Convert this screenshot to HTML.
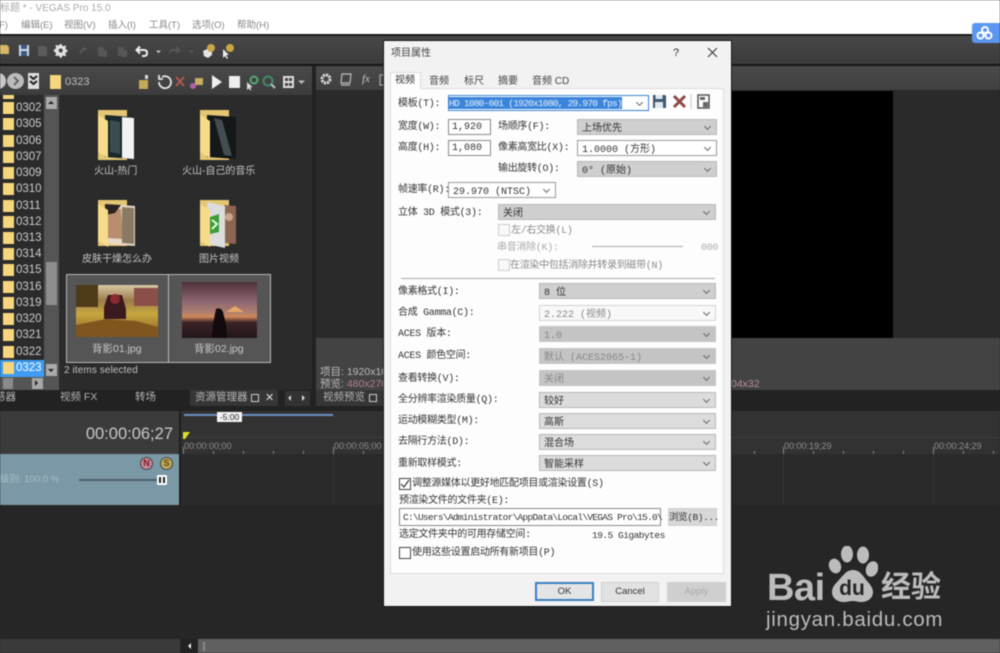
<!DOCTYPE html>
<html><head><meta charset="utf-8"><style>
html,body{margin:0;padding:0;background:#262626;overflow:hidden}
#p{position:relative;width:1000px;height:653px;overflow:hidden;background:#262626;filter:blur(.45px);font-family:"Liberation Sans","Noto Sans CJK SC",sans-serif}
#p div,#p span.a,#p svg{position:absolute}
.t{position:absolute;white-space:nowrap;line-height:16px;height:16px}
.tr .t{color:#ccc;font-size:11.5px;left:16px}
.fi{position:absolute;left:3px;width:11px;height:12px;background:#f6d77e}
.tb{color:#b5b5b5;font-size:10.5px}
.d{color:#333;font-size:10px;letter-spacing:-.3px;margin-top:2px;font-family:"Liberation Mono","Noto Sans CJK SC",monospace}
.s{position:absolute;height:14px;background:#cfcfcf;border:1px solid #b8b8b8;color:#333;font-size:10px;line-height:19px;padding-left:4px;font-family:"Liberation Mono","Noto Sans CJK SC",monospace;white-space:nowrap;box-sizing:content-box}
.s.w{background:#fff;border-color:#9a9a9a}
.s.dis{background:#c4c4c4;color:#888;border-color:#c4c4c4}
.s.dw{background:#f8f8f8;color:#888;border-color:#d4d4d4}
.s::after{content:"";position:absolute;right:6px;top:4px;width:4px;height:4px;border-right:1px solid #666;border-bottom:1px solid #666;transform:rotate(45deg)}
.i{position:absolute;background:#fff;border:1px solid #8a8a8a;color:#333;font-size:10px;line-height:16px;padding-left:3px;font-family:"Liberation Mono",monospace;white-space:nowrap}
.c{position:absolute;width:10px;height:10px;border:1px solid #444;background:#fff}
.c.o{border-color:#ccc;background:#f8f8f8}
.btn{position:absolute;height:18px;background:#e2e2e2;border:1px solid #d0d0d0;text-align:center;font-size:9.5px;line-height:18px;color:#333;box-sizing:content-box;white-space:nowrap}
.tc{color:#8f8f8f;font-size:9px;font-family:"Liberation Sans",sans-serif}
.tk{position:absolute;width:1px;height:3px;background:#888;top:451px}
</style></head><body><div id="p">

<!-- top white window -->
<div style="left:0;top:0;width:1000px;height:35px;background:#fff"></div>
<div class="t" style="left:0;top:1px;color:#aaa;font-size:10px">标题 * - VEGAS Pro 15.0</div>
<div class="t" style="left:-1px;top:18px;color:#8a8a8a;font-size:9.5px">F)</div>
<div class="t" style="left:21px;top:18px;color:#888;font-size:9.5px">编辑(E)</div>
<div class="t" style="left:64px;top:18px;color:#888;font-size:9.5px">视图(V)</div>
<div class="t" style="left:108px;top:18px;color:#888;font-size:9.5px">插入(I)</div>
<div class="t" style="left:149px;top:18px;color:#888;font-size:9.5px">工具(T)</div>
<div class="t" style="left:192px;top:18px;color:#888;font-size:9.5px">选项(O)</div>
<div class="t" style="left:237px;top:18px;color:#888;font-size:9.5px">帮助(H)</div>
<div style="left:0;top:34px;width:1000px;height:2px;background:#1a1a1a"></div>

<!-- main toolbar -->
<div style="left:0;top:36px;width:1000px;height:28px;background:linear-gradient(#484848,#3b3b3b)"></div>
<div style="left:0;top:64px;width:1000px;height:2px;background:#151515"></div>

<!-- cloud badge -->
<div style="left:972px;top:23px;width:28px;height:20px;background:#5b97f0;border-radius:3px 0 0 3px"></div>
<svg style="left:975px;top:25px" width="20" height="16" viewBox="0 0 20 16"><g fill="none" stroke="#fff" stroke-width="2"><circle cx="10" cy="5" r="3"/><circle cx="5.500" cy="10.500" r="3"/><circle cx="13.500" cy="10.500" r="3"/></g></svg>

<!-- toolbar icons -->
<svg style="left:0;top:40px" width="240" height="22" viewBox="0 0 240 22">
<path d="M0 5H7L9 7V14H0z" fill="#d8b868"/>
<g fill="#cfd8e8"><path d="M19 5H29V16H19z"/></g><path d="M21 5H27V9H21zM21 11H27V16H21z" fill="#3d5a80"/>
<path d="M38 6H45L47 8V16H38z" fill="#5c5c5c"/>
<path d="M63 5l1.500 0 .6 1.600 1.500 .6 1.500-.8 1.100 1.100-.8 1.500 .6 1.500 1.600.6v1.500l-1.600.6-.6 1.500.8 1.500-1.100 1.100-1.500-.8-1.500.6-.6 1.600h-1.500l-.6-1.600-1.500-.6-1.500.8-1.100-1.100.8-1.500-.6-1.500-1.600-.6V10.500l1.600-.6.6-1.500-.8-1.500 1.100-1.100 1.500.8 1.500-.6z" fill="#e0e0e0" transform="translate(-3,-1)"/>
<circle cx="60.700" cy="10.500" r="2" fill="#3f3f3f"/>
<path d="M80 13l4-5M84 8l2 2" stroke="#5a5a5a" stroke-width="2" fill="none"/>
<path d="M98 7h6v9h-6z M102 10h5v7h-5z" fill="#565656"/>
<path d="M118 7h6v9h-6z M122 10h5v7h-5z" fill="#565656"/>
<path d="M137 10h7q3 0 3 3t-3 3h-2M140 6.500l-3.500 3.500 3.500 3.500" stroke="#ededed" stroke-width="2" fill="none"/>
<path d="M156 10.500h5l-2.500 3z" fill="#bbb"/>
<path d="M179 10h-6q-3 0-3 3M176 7l3.500 3-3.500 3" stroke="#565656" stroke-width="2" fill="none"/>
<path d="M189 10.500h5l-2.500 3z" fill="#585858"/>
<path d="M203 11l6-3 3 3v4l-4 3-4-2z" fill="#e5e5e5"/><circle cx="211" cy="8" r="4" fill="#caa647"/>
<path d="M223 9v9l2-2 2 3 1-1-2-3h3z" fill="#eee"/><circle cx="230" cy="8" r="4" fill="#caa647"/>
</svg>

<!-- explorer pane -->
<div style="left:0;top:66px;width:312px;height:29px;background:linear-gradient(#4a4a4a,#3c3c3c)"></div>
<div style="left:0;top:95px;width:312px;height:295px;background:#2b2b2b"></div>
<div style="left:312px;top:66px;width:4px;height:324px;background:#222"></div>
<div style="left:0;top:390px;width:1000px;height:21px;background:#222"></div>

<!-- nav buttons -->
<div style="left:-9px;top:73px;width:15px;height:16px;background:#c8c8c8;border-radius:50%"></div>
<div style="left:7px;top:73px;width:17px;height:16px;background:#bcbcbc;border-radius:50%"></div>
<svg style="left:12px;top:76px" width="8" height="10" viewBox="0 0 8 10"><path d="M2 1l4 4-4 4" fill="none" stroke="#666" stroke-width="2"/></svg>
<div style="left:28px;top:73px;width:11px;height:16px;background:#ddd"></div>
<svg style="left:29px;top:75px" width="9" height="12" viewBox="0 0 9 12"><path d="M1 1l3.500 3L8 1M1 6l3.500 3L8 6" fill="none" stroke="#222" stroke-width="2"/></svg>
<div style="left:50px;top:75px;width:11px;height:14px;background:#f6d77e"></div>
<div class="t" style="left:65px;top:74px;color:#bdbdbd;font-size:11px">0323</div>

<svg style="left:135px;top:72px" width="175" height="20" viewBox="0 0 175 20">
<path d="M4 8h9v9H4z" fill="#c5a95a"/><path d="M10 3h3v4h-3z" fill="#d8d8d8"/>
<path d="M27 5a6 6 0 1 1-3 5M24 3v4h4" fill="none" stroke="#e4e4e4" stroke-width="1.800"/>
<path d="M41 5l8 9M49 5l-8 9" stroke="#b85a4f" stroke-width="1.800"/>
<path d="M60 6h8v7h-8z" fill="#c9ad60"/><circle cx="58" cy="14" r="3" fill="#b060a8"/>
<path d="M77 3l10 7-10 7z" fill="#eee"/>
<path d="M94 4h11v12H94z" fill="#eee"/>
<path d="M112 10v8l2-1.500 1.500 2 1-1-1.500-2 2.500-.5z" fill="#ddd"/><circle cx="119" cy="8" r="3.500" fill="none" stroke="#58a86c" stroke-width="2"/>
<circle cx="133" cy="9" r="4.500" fill="none" stroke="#3f8a68" stroke-width="2"/><path d="M136 12l4 4" stroke="#bbb" stroke-width="2"/>
<path d="M148 4h11v12h-11z" fill="#ddd"/><path d="M150 6h3v3h-3zM154 6h3v3h-3zM150 11h3v3h-3zM154 11h3v3h-3z" fill="#444"/>
<path d="M163 8.500h7l-3.500 3.500z" fill="#bbb"/>
</svg>

<!-- tree -->
<div class="tr" style="left:0;top:95px;width:45px;height:282px;background:#2b2b2b;overflow:hidden">
<div class="fi" style="top:-8px"></div>
<div class="fi" style="top:7px"></div><div class="t" style="top:5px">0302</div>
<div class="fi" style="top:23px"></div><div class="t" style="top:21px">0305</div>
<div class="fi" style="top:40px"></div><div class="t" style="top:38px">0306</div>
<div class="fi" style="top:56px"></div><div class="t" style="top:54px">0307</div>
<div class="fi" style="top:72px"></div><div class="t" style="top:70px">0309</div>
<div class="fi" style="top:88px"></div><div class="t" style="top:86px">0310</div>
<div class="fi" style="top:105px"></div><div class="t" style="top:103px">0311</div>
<div class="fi" style="top:121px"></div><div class="t" style="top:119px">0312</div>
<div class="fi" style="top:137px"></div><div class="t" style="top:135px">0313</div>
<div class="fi" style="top:153px"></div><div class="t" style="top:151px">0314</div>
<div class="fi" style="top:169px"></div><div class="t" style="top:167px">0315</div>
<div class="fi" style="top:186px"></div><div class="t" style="top:184px">0316</div>
<div class="fi" style="top:202px"></div><div class="t" style="top:200px">0319</div>
<div class="fi" style="top:218px"></div><div class="t" style="top:216px">0320</div>
<div class="fi" style="top:234px"></div><div class="t" style="top:232px">0321</div>
<div class="fi" style="top:251px"></div><div class="t" style="top:249px">0322</div>
<div style="left:0;top:265px;width:44px;height:17px;background:#3f9cf2"></div>
<div class="fi" style="top:267px"></div><div class="t" style="top:265px;color:#fff">0323</div>
</div>
<div style="left:44px;top:95px;width:15px;height:282px;background:#555"></div>
<div style="left:46px;top:97px;width:11px;height:12px;background:#ababab"></div>
<div style="left:48px;top:101px;width:0;height:0;border:3.500px solid transparent;border-bottom-color:#222;border-top:0"></div>
<div style="left:46px;top:262px;width:11px;height:43px;background:#8e8e8e"></div>
<div style="left:46px;top:364px;width:11px;height:12px;background:#ababab"></div>
<div style="left:48px;top:369px;width:0;height:0;border:3.500px solid transparent;border-top-color:#222;border-bottom:0"></div>
<div style="left:0;top:377px;width:59px;height:13px;background:#555"></div>
<div style="left:3px;top:378px;width:10px;height:11px;background:#8a8a8a"></div>
<div style="left:32px;top:378px;width:11px;height:11px;background:#a8a8a8"></div>
<div style="left:35px;top:380px;width:0;height:0;border:3.500px solid transparent;border-left-color:#222;border-right:0"></div>

<!-- folders -->
<svg style="left:96px;top:106px" width="42" height="56" viewBox="0 0 42 56">
<path d="M2 4h29v50H2z" fill="#e5c672"/><path d="M9 9l29 2v42l-29-2z" fill="#18282c"/><path d="M26 11l12 1v41l-12-1z" fill="#f2f2f2"/><path d="M14 14l10 2v32l-10-2z" fill="#3b4d4f"/><path d="M2 9l10 6v37L2 46z" fill="#f6dc8a"/></svg>
<svg style="left:198px;top:106px" width="42" height="56" viewBox="0 0 42 56">
<path d="M2 4h29v50H2z" fill="#e5c672"/><path d="M9 9l29 2v42l-29-2z" fill="#14181a"/><path d="M16 12l8 2 10 36-8-1z" fill="#454d50"/><path d="M2 9l10 6v37L2 46z" fill="#f6dc8a"/></svg>
<svg style="left:96px;top:197px" width="42" height="56" viewBox="0 0 42 56">
<path d="M2 3h29v46H2z" fill="#e5c672"/><path d="M9 7l30 2v40l-30-2z" fill="#e9d8c8"/><path d="M11 11l14 1 2 30-16-1z" fill="#b98d6e"/><path d="M9 7l16 1-6 8-10 2z" fill="#2b2320"/><path d="M26 10l12 1v36l-12-1z" fill="#8a7a64"/><path d="M2 7l10 6v37L2 44z" fill="#f6dc8a"/></svg>
<svg style="left:198px;top:197px" width="42" height="56" viewBox="0 0 42 56">
<path d="M2 3h29v46H2z" fill="#e5c672"/><path d="M26 8l12 1v38l-12-1z" fill="#8c6550"/><circle cx="31" cy="20" r="4" fill="#c9a58a"/><path d="M9 5l18 4v42L9 47z" fill="#dcdcdc"/><path d="M12 20l9-3v18l-9 2z" fill="#3d9c3a"/><path d="M14 23l5 4-5 5" fill="none" stroke="#dfd" stroke-width="2"/><path d="M2 7l10 6v37L2 44z" fill="#f6dc8a"/></svg>

<div class="t" style="left:94px;top:164px;color:#c4c4c4;font-size:10px">火山-热门</div>
<div class="t" style="left:182px;top:164px;color:#c4c4c4;font-size:10px">火山-自己的音乐</div>
<div class="t" style="left:82px;top:252px;color:#c4c4c4;font-size:10px">皮肤干燥怎么办</div>
<div class="t" style="left:199px;top:252px;color:#c4c4c4;font-size:10px">图片视频</div>

<!-- selected thumbs -->
<div style="left:66px;top:274px;width:101px;height:87px;background:#555;border:1px solid #b8b8b8"></div>
<div style="left:168px;top:274px;width:101px;height:87px;background:#555;border:1px solid #b8b8b8"></div>
<svg style="left:76px;top:285px" width="82" height="52" viewBox="0 0 82 52">
<defs><linearGradient id="g1" x1="0" y1="0" x2="0" y2="1"><stop offset="0" stop-color="#d8c9a8"/><stop offset=".3" stop-color="#9c7a4a"/><stop offset=".55" stop-color="#c7a840"/><stop offset="1" stop-color="#8a5a24"/></linearGradient>
<linearGradient id="g2" x1="0" y1="0" x2="0" y2="1"><stop offset="0" stop-color="#4d3038"/><stop offset=".35" stop-color="#8d6670"/><stop offset=".55" stop-color="#b08070"/><stop offset=".62" stop-color="#d0885a"/><stop offset=".72" stop-color="#3c2428"/><stop offset="1" stop-color="#22161a"/></linearGradient></defs>
<rect width="82" height="52" fill="url(#g1)"/><path d="M0 0h22v22H0z" fill="#4c3a18"/><path d="M58 3h24v18H58z" fill="#8a5048"/><path d="M32 10h14l4 14v10H28V22z" fill="#3a1a1e"/><circle cx="39" cy="14" r="5" fill="#8a2a30"/><path d="M0 40l30-6 30 2 22 6v10H0z" fill="#80561e"/></svg>
<svg style="left:182px;top:282px" width="75" height="56" viewBox="0 0 75 56">
<rect width="75" height="56" fill="url(#g2)"/><path d="M34 27q5-2 7 3l3 12 1 14H30l1-14z" fill="#120a0c"/><path d="M44 30h18l-9-6z" fill="#e8a86a"/></svg>
<div class="t" style="left:92px;top:341px;color:#c8c8c8;font-size:10.500px">背影01.jpg</div>
<div class="t" style="left:194px;top:341px;color:#c8c8c8;font-size:10.500px">背影02.jpg</div>
<div class="t" style="left:64px;top:363px;color:#c0c0c0;font-size:10px;letter-spacing:.1px">2 items selected</div>

<!-- tab strip -->
<div class="t tb" style="left:-5px;top:389px">感器</div>
<div class="t tb" style="left:60px;top:389px">视频 FX</div>
<div class="t tb" style="left:135px;top:389px">转场</div>
<div style="left:190px;top:390px;width:88px;height:16px;background:#363636"></div>
<div class="t tb" style="left:195px;top:389px">资源管理器</div>
<div style="left:251px;top:394px;width:6px;height:6px;border:1px solid #ccc"></div>
<div class="t" style="left:265px;top:390px;color:#ddd;font-size:11px">✕</div>
<div style="left:285px;top:391px;width:25px;height:15px;background:#333"></div>
<div style="left:288px;top:395px;width:0;height:0;border:3.500px solid transparent;border-right-color:#ccc;border-left:0"></div>
<div style="left:302px;top:395px;width:0;height:0;border:3.500px solid transparent;border-left-color:#ddd;border-right:0"></div>
<div style="left:316px;top:388px;width:68px;height:18px;background:#363636"></div>
<div class="t tb" style="left:323px;top:389px">视频预览</div>
<div style="left:369px;top:394px;width:6px;height:6px;border:1px solid #ccc"></div>

<!-- preview pane -->
<div style="left:316px;top:66px;width:684px;height:24px;background:linear-gradient(#4a4a4a,#404040)"></div>
<div style="left:316px;top:90px;width:684px;height:248px;background:#2a2a2a"></div>
<div style="left:732px;top:91px;width:161px;height:247px;background:#000"></div>
<div style="left:316px;top:338px;width:684px;height:52px;background:#434343"></div>
<svg style="left:318px;top:72px" width="70" height="16" viewBox="0 0 70 16">
<circle cx="8" cy="7" r="4" fill="none" stroke="#ddd" stroke-width="3" stroke-dasharray="2.200 .9"/>
<path d="M24 2h9l-1 9h-9z M23 13h9" fill="none" stroke="#bbb" stroke-width="1.200"/>
<path d="M62 3h7v10h-7z" fill="none" stroke="#aaa" stroke-width="1.200"/></svg>
<div class="t" style="left:362px;top:71px;color:#ccc;font-size:11px;font-style:italic;font-family:'Liberation Serif',serif">fx</div>
<div class="t" style="left:320px;top:364px;color:#bbb;font-size:10.500px">项目: 1920x10</div>
<div class="t" style="left:320px;top:376px;color:#bbb;font-size:10.500px">预览: <span style="color:#b08088">480x270</span></div>
<div class="t" style="left:731px;top:376px;color:#b89098;font-size:10.500px">04x32</div>

<!-- timeline -->
<div style="left:0;top:411px;width:180px;height:43px;background:#3b3b3b"></div>
<div class="t" style="left:73px;top:425px;color:#c8c8c8;font-size:16.500px;line-height:18px;height:18px;width:100px;text-align:right">00:00:06;27</div>
<div style="left:181px;top:411px;width:819px;height:43px;background:#323232"></div>
<div style="left:181px;top:437px;width:819px;height:1px;background:#3e3e3e"></div>
<div style="left:184px;top:414px;width:149px;height:2px;background:#6d8fc0"></div>
<div style="left:217px;top:412px;width:25px;height:10px;background:#f4f4f4;color:#222;font-size:8.500px;line-height:10px;text-align:center">-5:00</div>
<svg style="left:183px;top:431px" width="8" height="8" viewBox="0 0 8 8"><path d="M0 1h7L2 8H0z" fill="#dede30"/></svg>
<div class="t tc" style="left:184px;top:438px">00:00:00;00</div>
<div class="t tc" style="left:334px;top:438px">00:00:05;00</div>
<div class="t tc" style="left:784px;top:438px">00:00:19;29</div>
<div class="t tc" style="left:934px;top:438px">00:00:24;29</div>
<span class="tk" style="left:183px;top:447px;height:7px"></span><span class="tk" style="left:213px"></span><span class="tk" style="left:243px"></span><span class="tk" style="left:273px"></span><span class="tk" style="left:303px"></span><span class="tk" style="left:333px;top:447px;height:7px"></span><span class="tk" style="left:363px"></span>
<span class="tk" style="left:754px"></span><span class="tk" style="left:783px;top:447px;height:7px"></span><span class="tk" style="left:813px"></span><span class="tk" style="left:843px"></span><span class="tk" style="left:873px"></span><span class="tk" style="left:903px"></span><span class="tk" style="left:933px;top:447px;height:7px"></span><span class="tk" style="left:963px"></span><span class="tk" style="left:993px"></span>
<div style="left:181px;top:454px;width:819px;height:51px;background:#2a2a2a"></div>
<div style="left:783px;top:454px;width:1px;height:51px;background:#353535"></div>
<div style="left:933px;top:454px;width:1px;height:51px;background:#353535"></div>
<div style="left:333px;top:454px;width:1px;height:51px;background:#353535"></div>
<div style="left:0;top:454px;width:179px;height:51px;background:#7a98a6"></div>
<div style="left:179px;top:411px;width:2px;height:94px;background:#1f1f1f"></div>
<div class="t" style="left:0;top:472px;color:#a9bfc8;font-size:9.500px">级别: 100.0 %</div>
<div style="left:79px;top:479px;width:80px;height:2px;background:#4d5f68"></div>
<div style="left:157px;top:475px;width:10px;height:10px;background:#fff;border-radius:1px"></div>
<div style="left:159px;top:477px;width:2px;height:6px;background:#222"></div>
<div style="left:163px;top:477px;width:2px;height:6px;background:#222"></div>
<div style="left:140px;top:457px;width:11px;height:11px;background:#c98a96;border:1px solid #444;border-radius:50%;color:#7a1c2c;font-size:9px;font-weight:bold;line-height:11px;text-align:center">N</div>
<div style="left:160px;top:457px;width:11px;height:11px;background:#c2aa5a;border:1px solid #444;border-radius:50%;color:#5c4a10;font-size:9px;font-weight:bold;line-height:11px;text-align:center">S</div>
<div style="left:0;top:505px;width:1000px;height:134px;background:#262626"></div>
<div style="left:0;top:639px;width:180px;height:14px;background:#3a3a3a"></div>
<div style="left:181px;top:639px;width:16px;height:14px;background:#222"></div>
<div style="left:188px;top:643px;width:0;height:0;border:3.500px solid transparent;border-right-color:#eee;border-left:0"></div>
<div style="left:198px;top:639px;width:802px;height:14px;background:#606060"></div>
<div style="left:203px;top:642px;width:2px;height:9px;background:#888"></div>

<!-- Baidu watermark -->
<div class="t" style="left:767px;top:570px;height:36px;line-height:36px;color:#bcbcbc;font-size:38px;font-weight:bold;letter-spacing:-.5px">Bai</div>
<svg style="left:826px;top:546px" width="52" height="58" viewBox="0 0 52 58">
<g fill="#bcbcbc"><ellipse cx="9" cy="20" rx="6" ry="7.500" transform="rotate(-20 9 20)"/><ellipse cx="21" cy="8" rx="6" ry="8.500"/><ellipse cx="37" cy="9" rx="6" ry="8.500"/><ellipse cx="46" cy="23" rx="6" ry="8" transform="rotate(20 46 23)"/><path d="M27 24c7 0 10 6 14 11 4 4 6 8 6 11 0 6-5 10-12 10-3 0-5-1-8-1s-6 1-9 1c-7 0-12-4-12-10 0-4 2-7 6-11 5-5 8-11 15-11z"/></g>
<text x="26" y="49" text-anchor="middle" font-family="Liberation Sans" font-weight="bold" font-size="21" fill="#262626">du</text></svg>
<div class="t" style="left:881px;top:570px;height:36px;line-height:36px;color:#bcbcbc;font-size:30px;font-weight:bold">经验</div>
<div class="t" style="left:766px;top:609px;height:22px;line-height:22px;color:#bcbcbc;font-size:20.500px;letter-spacing:.7px">jingyan.baidu.com</div>

<!-- DIALOG -->
<div style="left:384px;top:41px;width:347px;height:565px;background:#f2f2f2;box-shadow:0 0 0 1px #161616"></div>
<div style="left:390px;top:88px;width:334px;height:486px;background:#fdfdfd;border:1px solid #dcdcdc;box-sizing:border-box"></div>
<div class="t" style="left:391px;top:46px;color:#444;font-size:10px">项目属性</div>
<div class="t" style="left:673px;top:45px;color:#333;font-size:11px">?</div>
<svg style="left:707px;top:47px" width="11" height="11" viewBox="0 0 11 11"><path d="M1 1l9 9M10 1l-9 9" stroke="#333" stroke-width="1"/></svg>
<div style="left:390px;top:72px;width:31px;height:17px;background:#fdfdfd;border:1px solid #dcdcdc;border-bottom:0;box-sizing:border-box"></div>
<div class="t" style="left:395px;top:73px;color:#333;font-size:10px">视频</div>
<div class="t" style="left:429px;top:74px;color:#444;font-size:10px">音频</div>
<div class="t" style="left:464px;top:74px;color:#444;font-size:10px">标尺</div>
<div class="t" style="left:498px;top:74px;color:#444;font-size:10px">摘要</div>
<div class="t" style="left:532px;top:74px;color:#444;font-size:10px">音频 CD</div>
<div style="left:421px;top:88px;width:146px;height:1px;background:#dcdcdc"></div>

<div class="t d" style="left:398px;top:95px">模板(T):</div>
<div class="s w" style="left:448px;top:95px;width:195px;border-color:#3c82d0"></div>
<div class="t" style="left:449px;top:97px;width:173px;height:12px;background:#3a85dc;color:#e8f0fa;font-size:9.500px;line-height:14px;font-family:'Liberation Mono','Noto Sans CJK SC',monospace;letter-spacing:-.76px;overflow:hidden">HD 1080-60i (1920x1080, 29.970 fps)</div>
<svg style="left:652px;top:94px" width="64" height="15" viewBox="0 0 64 15">
<path d="M1 1h12l1 1v12H1z" fill="#3f5a70"/><path d="M3.500 1h7v4h-7zM3 8h8v6H3z" fill="#dfe8ee"/>
<path d="M22 2l11 11M33 2L22 13" stroke="#8c4a4a" stroke-width="3"/>
<path d="M39 0v15" stroke="#ccc"/>
<path d="M46 1h11v13H46z" fill="none" stroke="#555" stroke-width="1.500"/><path d="M48 3h5v3h-5zM51 8h5v5h-5z" fill="#666"/></svg>

<div class="t d" style="left:398px;top:118px">宽度(W):</div>
<div class="i" style="left:448px;top:119px;width:38px;height:14px">1,920</div>
<div class="t d" style="left:498px;top:118px">场顺序(F):</div>
<div class="s" style="left:577px;top:119px;width:134px">上场优先</div>

<div class="t d" style="left:398px;top:139px">高度(H):</div>
<div class="i" style="left:448px;top:140px;width:38px;height:14px">1,080</div>
<div class="t d" style="left:498px;top:139px">像素高宽比(X):</div>
<div class="s w" style="left:577px;top:140px;width:134px">1.0000 (方形)</div>

<div class="t d" style="left:498px;top:160px">输出旋转(O):</div>
<div class="s" style="left:577px;top:161px;width:134px">0° (原始)</div>

<div class="t d" style="left:398px;top:181px">帧速率(R):</div>
<div class="s w" style="left:448px;top:182px;width:102px">29.970 (NTSC)</div>

<div class="t d" style="left:398px;top:204px">立体 3D 模式(3):</div>
<div class="s" style="left:498px;top:204px;width:212px">关闭</div>

<div class="c o" style="left:498px;top:224px"></div>
<div class="t d" style="left:511px;top:222px;color:#8a8a8a">左/右交换(L)</div>
<div class="t d" style="left:497px;top:239px;color:#aaa">串音消除(K):</div>
<div style="left:592px;top:246px;width:91px;height:1px;background:#aaa"></div>
<div class="t d" style="left:701px;top:239px;color:#aaa">000</div>
<div class="c o" style="left:498px;top:259px"></div>
<div class="t d" style="left:510px;top:257px;color:#8a8a8a">在渲染中包括消除并转录到磁带(N)</div>
<div style="left:401px;top:278px;width:314px;height:1px;background:#a8a8a8"></div>

<div class="t d" style="left:398px;top:283px">像素格式(I):</div>
<div class="s" style="left:539px;top:283px;width:171px">8 位</div>
<div class="t d" style="left:398px;top:304px">合成 Gamma(C):</div>
<div class="s dw" style="left:539px;top:305px;width:171px">2.222 (视频)</div>
<div class="t d" style="left:398px;top:325px">ACES 版本:</div>
<div class="s dis" style="left:539px;top:326px;width:171px">1.0</div>
<div class="t d" style="left:398px;top:347px">ACES 颜色空间:</div>
<div class="s dis" style="left:539px;top:348px;width:171px">默认 (ACES2065-1)</div>
<div class="t d" style="left:398px;top:370px">查看转换(V):</div>
<div class="s dis" style="left:539px;top:370px;width:171px">关闭</div>
<div class="t d" style="left:398px;top:391px">全分辨率渲染质量(Q):</div>
<div class="s" style="left:539px;top:392px;width:171px;background:#dcdcdc">较好</div>
<div class="t d" style="left:398px;top:412px">运动模糊类型(M):</div>
<div class="s" style="left:539px;top:413px;width:171px;background:#dcdcdc">高斯</div>
<div class="t d" style="left:398px;top:433px">去隔行方法(D):</div>
<div class="s" style="left:539px;top:434px;width:171px;background:#dcdcdc">混合场</div>
<div class="t d" style="left:398px;top:455px">重新取样模式:</div>
<div class="s" style="left:539px;top:455px;width:171px;background:#dcdcdc">智能采样</div>

<div class="c" style="left:399px;top:478px"></div>
<svg style="left:400px;top:479px" width="10" height="10" viewBox="0 0 10 10"><path d="M1 5l3 3 5-7" fill="none" stroke="#333" stroke-width="1.200"/></svg>
<div class="t d" style="left:412px;top:475px">调整源媒体以更好地匹配项目或渲染设置(S)</div>
<div class="t d" style="left:399px;top:492px">预渲染文件的文件夹(E):</div>
<div class="i" style="left:399px;top:508px;width:257px;height:16px;font-size:9.500px;letter-spacing:-.72px;line-height:18px">C:\Users\Administrator\AppData\Local\VEGAS Pro\15.0\</div>
<div class="btn d" style="left:668px;top:508px;width:47px;height:16px;line-height:18px;background:#d8d8d8;margin-top:0;letter-spacing:-.4px">浏览(B)...</div>
<div class="t d" style="left:399px;top:526px">选定文件夹中的可用存储空间:</div>
<div class="t d" style="left:592px;top:526px;letter-spacing:-.5px;font-size:9.500px">19.5 Gigabytes</div>
<div class="c" style="left:399px;top:547px"></div>
<div class="t d" style="left:412px;top:544px">使用这些设置启动所有新项目(P)</div>

<div class="btn" style="left:535px;top:582px;width:55px;height:15px;line-height:16px;background:#e4e4e4;border:2px solid #3a80c4">OK</div>
<div class="btn" style="left:601px;top:582px;width:56px;line-height:18px">Cancel</div>
<div class="btn" style="left:667px;top:582px;width:57px;background:#cfcfcf;color:#aaa;border-color:#cfcfcf">Apply</div>

</div></body></html>
